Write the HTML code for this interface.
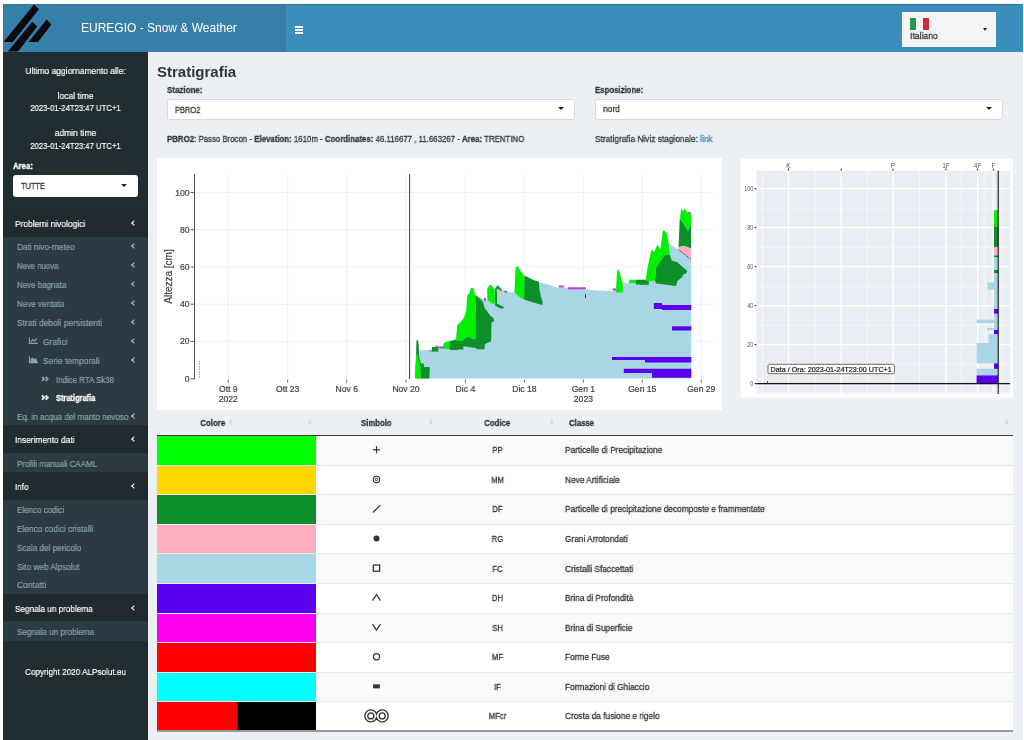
<!DOCTYPE html>
<html><head><meta charset="utf-8">
<style>
*{box-sizing:border-box;margin:0;padding:0}
html,body{width:1024px;height:740px;overflow:hidden;background:#fff;font-family:"Liberation Sans",sans-serif}
.a{position:absolute}
.t{position:absolute;white-space:nowrap;line-height:20px;height:20px;will-change:transform}
.ov{position:absolute;left:0;top:0;will-change:transform}
.chev{position:absolute;width:4px;height:4px;border-left:1.7px solid #b8c7ce;border-bottom:1.7px solid #b8c7ce;transform:rotate(45deg)}
.caret{position:absolute;width:0;height:0;border-left:3.4px solid transparent;border-right:3.4px solid transparent;border-top:3.8px solid #222}
.sort{position:absolute;width:4px;height:8px}
.sort:before,.sort:after{content:"";position:absolute;left:0;border-left:2px solid transparent;border-right:2px solid transparent}
.sort:before{top:0;border-bottom:3px solid #d3d6db}
.sort:after{bottom:0;border-top:3px solid #d3d6db}
</style></head><body>

<div class="a" style="left:3.00px;top:4.00px;width:1019.50px;height:736.00px;background:#ecf0f5;"></div>
<div class="a" style="left:3.00px;top:4.00px;width:282.50px;height:47.50px;background:#367fa9;"></div>
<div class="a" style="left:285.50px;top:4.00px;width:737.00px;height:47.50px;background:#3c8dbc;"></div>
<div class="a" style="left:3.00px;top:4.00px;width:1019.50px;height:1.00px;background:#33759c;"></div>
<div class="a" style="left:3.00px;top:4.00px;width:1.00px;height:47.50px;background:#33759c;"></div>
<svg class="ov" width="60" height="56" viewBox="0 0 60 56">
<polygon points="34.0,4.5 38.9,9.3 12.8,42 3.5,42" fill="#0a0a0f"/>
<polygon points="32.3,21.7 37.2,26.6 18.0,51.5 7.8,51.5" fill="#0a0a0f"/>
<polygon points="46.7,19.6 51.4,24.6 38.0,42 28.6,42" fill="#0a0a0f"/>
</svg>
<div class="t" style="left:81px;top:17.7px;font-size:12px;color:#fff;transform:scaleY(1.05)">EUREGIO - Snow &amp; Weather</div>
<div class="a" style="left:295.00px;top:25.80px;width:8.30px;height:1.80px;background:#fff;"></div>
<div class="a" style="left:295.00px;top:28.80px;width:8.30px;height:1.80px;background:#fff;"></div>
<div class="a" style="left:295.00px;top:31.80px;width:8.30px;height:1.80px;background:#fff;"></div>
<div class="a" style="left:901.80px;top:11.80px;width:94.60px;height:35.20px;background:#f4f4f4;"></div>
<div class="a" style="left:910.20px;top:17.50px;width:6.20px;height:12.50px;background:#1f9a48;"></div>
<div class="a" style="left:922.70px;top:17.50px;width:6.50px;height:12.50px;background:#d42a35;"></div>
<div class="t" style="top:26.00px;font-size:9.56px;color:#333;-webkit-text-stroke:0.28px #333;left:910.00px;transform:scaleX(0.900);transform-origin:0 50%;">Italiano</div>
<div class="caret" style="left:983px;top:28.2px;border-left-width:2.9px;border-right-width:2.9px;border-top-width:3.2px"></div>
<div class="a" style="left:3.00px;top:51.50px;width:145.00px;height:688.50px;background:#222d32;"></div>
<div class="t" style="top:61.00px;font-size:9.39px;color:#fff;-webkit-text-stroke:0.18px #fff;left:3.00px;width:145.00px;text-align:center;transform:scaleX(0.900);transform-origin:50% 50%;">Ultimo aggiornamento alle:</div>
<div class="t" style="top:85.80px;font-size:9.44px;color:#fff;-webkit-text-stroke:0.18px #fff;left:3.00px;width:145.00px;text-align:center;transform:scaleX(0.900);transform-origin:50% 50%;">local time</div>
<div class="t" style="top:98.40px;font-size:8.61px;color:#fff;-webkit-text-stroke:0.18px #fff;left:3.00px;width:145.00px;text-align:center;transform:scaleX(0.900);transform-origin:50% 50%;">2023-01-24T23:47 UTC+1</div>
<div class="t" style="top:123.20px;font-size:9.44px;color:#fff;-webkit-text-stroke:0.18px #fff;left:3.00px;width:145.00px;text-align:center;transform:scaleX(0.900);transform-origin:50% 50%;">admin time</div>
<div class="t" style="top:135.80px;font-size:8.61px;color:#fff;-webkit-text-stroke:0.18px #fff;left:3.00px;width:145.00px;text-align:center;transform:scaleX(0.900);transform-origin:50% 50%;">2023-01-24T23:47 UTC+1</div>
<div class="t" style="top:156.00px;font-size:8.67px;color:#fff;font-weight:bold;-webkit-text-stroke:0.28px #fff;left:12.50px;transform:scaleX(0.900);transform-origin:0 50%;">Area:</div>
<div class="a" style="left:13.00px;top:175.40px;width:125.00px;height:21.50px;background:#fff;border-radius:3px"></div>
<div class="t" style="top:177.30px;font-size:8.28px;color:#333;-webkit-text-stroke:0.28px #333;left:21.00px;transform:scaleX(0.900);transform-origin:0 50%;">TUTTE</div>
<div class="caret" style="left:120.8px;top:183.8px"></div>
<div class="a" style="left:3.00px;top:209.70px;width:145.00px;height:27.00px;background:#202a2f;"></div>
<div class="a" style="left:3.00px;top:236.70px;width:145.00px;height:188.70px;background:#2c3b41;"></div>
<div class="a" style="left:3.00px;top:425.40px;width:145.00px;height:27.60px;background:#202a2f;"></div>
<div class="a" style="left:3.00px;top:453.00px;width:145.00px;height:18.90px;background:#2c3b41;"></div>
<div class="a" style="left:3.00px;top:471.90px;width:145.00px;height:27.70px;background:#202a2f;"></div>
<div class="a" style="left:3.00px;top:499.60px;width:145.00px;height:94.30px;background:#2c3b41;"></div>
<div class="a" style="left:3.00px;top:593.90px;width:145.00px;height:26.90px;background:#202a2f;"></div>
<div class="a" style="left:3.00px;top:620.80px;width:145.00px;height:19.90px;background:#2c3b41;"></div>
<div class="t" style="top:213.80px;font-size:9.37px;color:#fff;-webkit-text-stroke:0.18px #fff;left:14.70px;transform:scaleX(0.900);transform-origin:0 50%;">Problemi nivologici</div>
<div class="chev" style="left:132.4px;top:220.80px;border-color:#fff"></div>
<div class="t" style="top:237.30px;font-size:9.16px;color:#8aa4af;-webkit-text-stroke:0.18px #8aa4af;left:16.60px;transform:scaleX(0.900);transform-origin:0 50%;">Dati nivo-meteo</div>
<div class="chev" style="left:132.4px;top:244.30px;border-color:#b8c7ce"></div>
<div class="t" style="top:256.10px;font-size:8.63px;color:#8aa4af;-webkit-text-stroke:0.18px #8aa4af;left:16.60px;transform:scaleX(0.900);transform-origin:0 50%;">Neve nuova</div>
<div class="chev" style="left:132.4px;top:263.10px;border-color:#b8c7ce"></div>
<div class="t" style="top:275.10px;font-size:8.84px;color:#8aa4af;-webkit-text-stroke:0.18px #8aa4af;left:16.60px;transform:scaleX(0.900);transform-origin:0 50%;">Neve bagnata</div>
<div class="chev" style="left:132.4px;top:282.10px;border-color:#b8c7ce"></div>
<div class="t" style="top:293.90px;font-size:8.92px;color:#8aa4af;-webkit-text-stroke:0.18px #8aa4af;left:16.60px;transform:scaleX(0.900);transform-origin:0 50%;">Neve ventata</div>
<div class="chev" style="left:132.4px;top:300.90px;border-color:#b8c7ce"></div>
<div class="t" style="top:312.50px;font-size:9.37px;color:#8aa4af;-webkit-text-stroke:0.18px #8aa4af;left:16.60px;transform:scaleX(0.900);transform-origin:0 50%;">Strati deboli persistenti</div>
<div class="chev" style="left:132.4px;top:319.50px;border-color:#b8c7ce"></div>
<div class="t" style="top:331.80px;font-size:9.44px;color:#8aa4af;-webkit-text-stroke:0.18px #8aa4af;left:43.30px;transform:scaleX(0.900);transform-origin:0 50%;">Grafici</div>
<div class="chev" style="left:132.4px;top:338.80px;border-color:#b8c7ce"></div>
<div class="t" style="top:350.60px;font-size:9.36px;color:#8aa4af;-webkit-text-stroke:0.18px #8aa4af;left:43.30px;transform:scaleX(0.900);transform-origin:0 50%;">Serie temporali</div>
<div class="chev" style="left:132.4px;top:357.60px;border-color:#b8c7ce"></div>
<div class="t" style="top:369.80px;font-size:8.76px;color:#8aa4af;-webkit-text-stroke:0.18px #8aa4af;left:56.00px;transform:scaleX(0.900);transform-origin:0 50%;">Indice RTA Sk38</div>
<div class="t" style="top:388.40px;font-size:8.29px;color:#fff;font-weight:bold;-webkit-text-stroke:0.28px #fff;left:56.00px;transform:scaleX(0.900);transform-origin:0 50%;">Stratigrafia</div>
<div class="t" style="top:406.90px;font-size:9.02px;color:#8aa4af;-webkit-text-stroke:0.18px #8aa4af;left:16.60px;transform:scaleX(0.900);transform-origin:0 50%;">Eq. in acqua del manto nevoso</div>
<div class="chev" style="left:132.4px;top:413.90px;border-color:#b8c7ce"></div>
<div class="t" style="top:430.30px;font-size:9.29px;color:#fff;-webkit-text-stroke:0.18px #fff;left:14.70px;transform:scaleX(0.900);transform-origin:0 50%;">Inserimento dati</div>
<div class="chev" style="left:132.4px;top:437.30px;border-color:#fff"></div>
<div class="t" style="top:453.60px;font-size:8.92px;color:#8aa4af;-webkit-text-stroke:0.18px #8aa4af;left:16.60px;transform:scaleX(0.900);transform-origin:0 50%;">Profili manuali CAAML</div>
<div class="t" style="top:476.60px;font-size:8.97px;color:#fff;-webkit-text-stroke:0.18px #fff;left:14.70px;transform:scaleX(0.900);transform-origin:0 50%;">Info</div>
<div class="chev" style="left:132.4px;top:483.60px;border-color:#fff"></div>
<div class="t" style="top:500.20px;font-size:8.92px;color:#8aa4af;-webkit-text-stroke:0.18px #8aa4af;left:16.60px;transform:scaleX(0.900);transform-origin:0 50%;">Elenco codici</div>
<div class="t" style="top:518.80px;font-size:9.20px;color:#8aa4af;-webkit-text-stroke:0.18px #8aa4af;left:16.60px;transform:scaleX(0.900);transform-origin:0 50%;">Elenco codici cristalli</div>
<div class="t" style="top:538.00px;font-size:9.04px;color:#8aa4af;-webkit-text-stroke:0.18px #8aa4af;left:16.60px;transform:scaleX(0.900);transform-origin:0 50%;">Scala del pericolo</div>
<div class="t" style="top:556.60px;font-size:9.15px;color:#8aa4af;-webkit-text-stroke:0.18px #8aa4af;left:16.60px;transform:scaleX(0.900);transform-origin:0 50%;">Sito web Alpsolut</div>
<div class="t" style="top:575.40px;font-size:9.44px;color:#8aa4af;-webkit-text-stroke:0.18px #8aa4af;left:16.60px;transform:scaleX(0.900);transform-origin:0 50%;">Contatti</div>
<div class="t" style="top:598.50px;font-size:9.09px;color:#fff;-webkit-text-stroke:0.18px #fff;left:14.70px;transform:scaleX(0.900);transform-origin:0 50%;">Segnala un problema</div>
<div class="chev" style="left:132.4px;top:605.50px;border-color:#fff"></div>
<div class="t" style="top:622.00px;font-size:9.04px;color:#8aa4af;-webkit-text-stroke:0.18px #8aa4af;left:16.60px;transform:scaleX(0.900);transform-origin:0 50%;">Segnala un problema</div>
<div class="t" style="top:662.40px;font-size:9.06px;color:#fff;-webkit-text-stroke:0.18px #fff;left:3.00px;width:145.00px;text-align:center;transform:scaleX(0.900);transform-origin:50% 50%;">Copyright 2020 ALPsolut.eu</div>
<svg class="ov" width="160" height="420" viewBox="0 0 160 420">
<path d="M29.4,337.4 V343.4 H37.8" stroke="#8aa4af" stroke-width="1.1" fill="none"/>
<path d="M30.8,341.8 L32.8,339.6 L34.6,341 L37,338.4" stroke="#8aa4af" stroke-width="1.2" fill="none"/>
<path d="M29.4,356.2 V362.6 H38" stroke="#8aa4af" stroke-width="1.1" fill="none"/>
<path d="M30.6,362 V359 L32.4,357.4 L34.2,359.2 L35.8,357.8 L37.6,362 Z" fill="#8aa4af"/>
<path d="M42,376.8 L44.2,378.9 L42,381 M45.6,376.8 L47.8,378.9 L45.6,381" stroke="#8aa4af" stroke-width="1.7" fill="none"/>
<path d="M42,395.5 L44.2,397.6 L42,399.7 M45.6,395.5 L47.8,397.6 L45.6,399.7" stroke="#fff" stroke-width="1.8" fill="none"/>
</svg>
<div class="t" style="left:157.4px;top:62.1px;font-size:15px;font-weight:bold;color:#333">Stratigrafia</div>
<div class="t" style="top:79.50px;font-size:8.89px;color:#333;font-weight:bold;-webkit-text-stroke:0.28px #333;left:167.00px;transform:scaleX(0.900);transform-origin:0 50%;">Stazione:</div>
<div class="a" style="left:167.00px;top:99.20px;width:408.40px;height:20.40px;background:#fff;border:1px solid #d6dadf;border-radius:2.5px"></div>
<div class="t" style="top:99.60px;font-size:8.33px;color:#333;-webkit-text-stroke:0.28px #333;left:174.80px;transform:scaleX(0.900);transform-origin:0 50%;">PBRO2</div>
<div class="caret" style="left:558.3px;top:107.4px"></div>
<div class="t" style="top:79.50px;font-size:8.67px;color:#333;font-weight:bold;-webkit-text-stroke:0.28px #333;left:594.90px;transform:scaleX(0.900);transform-origin:0 50%;">Esposizione:</div>
<div class="a" style="left:594.90px;top:99.20px;width:408.20px;height:20.40px;background:#fff;border:1px solid #d6dadf;border-radius:2.5px"></div>
<div class="t" style="top:99.40px;font-size:9.33px;color:#333;-webkit-text-stroke:0.28px #333;left:603.00px;transform:scaleX(0.900);transform-origin:0 50%;">nord</div>
<div class="caret" style="left:985.6px;top:107.4px"></div>
<div class="t" style="top:128.90px;font-size:8.72px;color:#333;-webkit-text-stroke:0.28px #333;left:167.00px;transform:scaleX(0.900);transform-origin:0 50%;"><b>PBRO2</b>: Passo Brocon - <b>Elevation:</b> 1610m - <b>Coordinates:</b> 46.116677 , 11.663267 - <b>Area:</b> TRENTINO</div>
<div class="t" style="top:129.30px;font-size:9.22px;color:#333;-webkit-text-stroke:0.28px #333;left:595.00px;transform:scaleX(0.900);transform-origin:0 50%;">Stratigrafia Niviz stagionale: <span style="color:#3c8dbc;-webkit-text-stroke-color:#3c8dbc">link</span></div>
<svg class="ov" width="1024" height="740" viewBox="0 0 1024 740" font-family='"Liberation Sans", sans-serif'><rect x="157.00" y="158.00" width="565.00" height="252.00" fill="#fff" /><line x1="195.00" y1="341.40" x2="714.50" y2="341.40" stroke="#eeeeee" stroke-width="0.90" /><line x1="195.00" y1="304.20" x2="714.50" y2="304.20" stroke="#eeeeee" stroke-width="0.90" /><line x1="195.00" y1="267.00" x2="714.50" y2="267.00" stroke="#eeeeee" stroke-width="0.90" /><line x1="195.00" y1="229.70" x2="714.50" y2="229.70" stroke="#eeeeee" stroke-width="0.90" /><line x1="195.00" y1="192.50" x2="714.50" y2="192.50" stroke="#eeeeee" stroke-width="0.90" /><line x1="228.30" y1="174.20" x2="228.30" y2="378.70" stroke="#eeeeee" stroke-width="0.90" /><line x1="287.70" y1="174.20" x2="287.70" y2="378.70" stroke="#eeeeee" stroke-width="0.90" /><line x1="346.70" y1="174.20" x2="346.70" y2="378.70" stroke="#eeeeee" stroke-width="0.90" /><line x1="406.00" y1="174.20" x2="406.00" y2="378.70" stroke="#eeeeee" stroke-width="0.90" /><line x1="465.40" y1="174.20" x2="465.40" y2="378.70" stroke="#eeeeee" stroke-width="0.90" /><line x1="524.40" y1="174.20" x2="524.40" y2="378.70" stroke="#eeeeee" stroke-width="0.90" /><line x1="583.40" y1="174.20" x2="583.40" y2="378.70" stroke="#eeeeee" stroke-width="0.90" /><line x1="642.30" y1="174.20" x2="642.30" y2="378.70" stroke="#eeeeee" stroke-width="0.90" /><line x1="701.30" y1="174.20" x2="701.30" y2="378.70" stroke="#eeeeee" stroke-width="0.90" /><line x1="194.50" y1="174.00" x2="194.50" y2="379.20" stroke="#555" stroke-width="1.00" /><line x1="190.50" y1="378.70" x2="194.50" y2="378.70" stroke="#555" stroke-width="0.90" /><text x="189.5" y="381.7" font-size="8.60" fill="#444" stroke="#444" stroke-width="0.22" text-anchor="end" font-weight="normal" >0</text><line x1="190.50" y1="341.40" x2="194.50" y2="341.40" stroke="#555" stroke-width="0.90" /><text x="189.5" y="344.4" font-size="8.60" fill="#444" stroke="#444" stroke-width="0.22" text-anchor="end" font-weight="normal" >20</text><line x1="190.50" y1="304.20" x2="194.50" y2="304.20" stroke="#555" stroke-width="0.90" /><text x="189.5" y="307.2" font-size="8.60" fill="#444" stroke="#444" stroke-width="0.22" text-anchor="end" font-weight="normal" >40</text><line x1="190.50" y1="267.00" x2="194.50" y2="267.00" stroke="#555" stroke-width="0.90" /><text x="189.5" y="270.0" font-size="8.60" fill="#444" stroke="#444" stroke-width="0.22" text-anchor="end" font-weight="normal" >60</text><line x1="190.50" y1="229.70" x2="194.50" y2="229.70" stroke="#555" stroke-width="0.90" /><text x="189.5" y="232.7" font-size="8.60" fill="#444" stroke="#444" stroke-width="0.22" text-anchor="end" font-weight="normal" >80</text><line x1="190.50" y1="192.50" x2="194.50" y2="192.50" stroke="#555" stroke-width="0.90" /><text x="189.5" y="195.5" font-size="8.60" fill="#444" stroke="#444" stroke-width="0.22" text-anchor="end" font-weight="normal" >100</text><line x1="228.30" y1="379.50" x2="228.30" y2="383.00" stroke="#666" stroke-width="0.90" /><text x="228.3" y="391.8" font-size="8.60" fill="#444" stroke="#444" stroke-width="0.22" text-anchor="middle" font-weight="normal" >Ott 9</text><line x1="287.70" y1="379.50" x2="287.70" y2="383.00" stroke="#666" stroke-width="0.90" /><text x="287.7" y="391.8" font-size="8.60" fill="#444" stroke="#444" stroke-width="0.22" text-anchor="middle" font-weight="normal" >Ott 23</text><line x1="346.70" y1="379.50" x2="346.70" y2="383.00" stroke="#666" stroke-width="0.90" /><text x="346.7" y="391.8" font-size="8.60" fill="#444" stroke="#444" stroke-width="0.22" text-anchor="middle" font-weight="normal" >Nov 6</text><line x1="406.00" y1="379.50" x2="406.00" y2="383.00" stroke="#666" stroke-width="0.90" /><text x="406.0" y="391.8" font-size="8.60" fill="#444" stroke="#444" stroke-width="0.22" text-anchor="middle" font-weight="normal" >Nov 20</text><line x1="465.40" y1="379.50" x2="465.40" y2="383.00" stroke="#666" stroke-width="0.90" /><text x="465.4" y="391.8" font-size="8.60" fill="#444" stroke="#444" stroke-width="0.22" text-anchor="middle" font-weight="normal" >Dic 4</text><line x1="524.40" y1="379.50" x2="524.40" y2="383.00" stroke="#666" stroke-width="0.90" /><text x="524.4" y="391.8" font-size="8.60" fill="#444" stroke="#444" stroke-width="0.22" text-anchor="middle" font-weight="normal" >Dic 18</text><line x1="583.40" y1="379.50" x2="583.40" y2="383.00" stroke="#666" stroke-width="0.90" /><text x="583.4" y="391.8" font-size="8.60" fill="#444" stroke="#444" stroke-width="0.22" text-anchor="middle" font-weight="normal" >Gen 1</text><line x1="642.30" y1="379.50" x2="642.30" y2="383.00" stroke="#666" stroke-width="0.90" /><text x="642.3" y="391.8" font-size="8.60" fill="#444" stroke="#444" stroke-width="0.22" text-anchor="middle" font-weight="normal" >Gen 15</text><line x1="701.30" y1="379.50" x2="701.30" y2="383.00" stroke="#666" stroke-width="0.90" /><text x="701.3" y="391.8" font-size="8.60" fill="#444" stroke="#444" stroke-width="0.22" text-anchor="middle" font-weight="normal" >Gen 29</text><text x="228.3" y="402.4" font-size="8.60" fill="#444" stroke="#444" stroke-width="0.22" text-anchor="middle" font-weight="normal" >2022</text><text x="583.4" y="402.4" font-size="8.60" fill="#444" stroke="#444" stroke-width="0.22" text-anchor="middle" font-weight="normal" >2023</text><text x="0.0" y="0.0" font-size="10.00" fill="#444" stroke="#444" stroke-width="0.22" text-anchor="middle" font-weight="normal" transform="translate(171.8,276.5) rotate(-90)">Altezza [cm]</text><line x1="199.50" y1="361.00" x2="199.50" y2="378.00" stroke="#888" stroke-width="0.80" stroke-dasharray="1.5,1"/><polygon points="414.6,378.5 416.0,350.0 417.4,339.0 419.0,350.3 431.0,350.3 432.0,347.0 438.0,347.0 440.0,345.7 443.4,346.2 445.8,342.3 449.7,341.3 455.6,339.4 457.5,324.8 460.9,321.9 464.3,317.0 466.3,311.2 467.2,295.6 469.2,293.7 471.1,287.8 473.5,288.3 475.0,294.6 482.8,298.5 487.5,300.0 487.2,289.5 489.3,285.3 491.7,285.6 494.5,289.5 497.7,285.3 501.6,289.5 507.2,291.0 507.4,292.3 514.6,292.3 515.6,267.7 517.4,266.0 524.4,276.2 538.8,281.8 539.5,282.5 548.0,284.2 556.6,287.4 585.0,289.5 610.0,291.2 616.0,290.0 618.1,268.9 622.2,281.0 627.6,283.8 629.6,279.7 645.6,280.9 647.5,268.4 651.2,251.0 652.4,249.8 654.3,252.3 657.4,244.8 660.5,249.8 663.0,230.5 664.9,231.1 666.8,233.6 668.6,243.6 678.6,249.8 679.8,222.4 681.1,208.7 682.9,211.2 684.8,208.7 687.3,212.4 689.2,211.8 691.1,213.7 691.1,378.5" fill="#a9d6e5" /><polygon points="416.0,366.0 416.4,341.0 417.5,339.2 418.5,343.0 419.2,357.0 420.8,363.5 423.8,363.5 423.8,367.0 429.8,367.0 429.4,378.5 421.0,378.5" fill="#0d8f29" /><polygon points="415.0,378.5 415.3,366.0 416.3,356.0 417.3,353.0 418.6,359.0 420.4,366.0 421.2,378.5" fill="#00f000" /><rect x="432.00" y="347.00" width="6.30" height="4.60" fill="#0d8f29" /><rect x="429.30" y="350.20" width="2.50" height="1.40" fill="#c83ad8" opacity="0.7"/><polygon points="435.2,345.2 437.5,345.2 440.0,347.0 443.0,347.0 443.0,348.4 439.5,348.4 437.0,346.8 435.2,346.8" fill="#c83ad8" opacity="0.75"/><polygon points="443.0,348.0 444.0,343.0 449.0,341.5 451.0,341.5 451.0,349.0 443.0,349.0" fill="#00f000" /><polygon points="475.0,294.6 477.0,296.6 480.8,299.5 482.8,301.4 484.7,308.3 487.7,312.1 490.6,316.0 493.5,318.0 494.0,320.9 491.5,322.8 491.1,341.3 484.7,344.2 484.7,349.3 477.0,349.3 476.0,348.1 463.3,346.2 463.3,349.6 458.5,349.6 457.5,350.0 449.7,350.0 449.7,341.2 456.0,339.6 462.4,341.0 464.3,338.4 469.2,336.5 473.1,339.4 476.0,338.4 476.0,311.2" fill="#0d8f29" /><polygon points="456.0,340.5 457.5,324.8 460.9,321.9 464.3,317.0 466.3,311.2 467.2,295.6 469.2,293.7 471.1,287.8 473.5,288.3 475.0,294.6 476.0,311.2 476.0,338.4 473.1,339.4 469.2,336.5 464.3,338.4 462.4,341.0 456.0,341.0" fill="#00f000" /><polygon points="443.4,348.6 443.4,344.0 446.0,342.0 449.7,341.2 449.7,348.6" fill="#00f000" /><rect x="440.00" y="346.50" width="3.40" height="1.90" fill="#c83ad8" opacity="0.75"/><polygon points="494.5,289.5 497.7,285.3 501.6,289.5 501.6,291.5 497.7,288.5 496.0,291.0" fill="#0d8f29" /><polygon points="494.8,291.0 497.0,291.0 497.0,303.6 503.7,307.0 503.7,308.5 500.5,308.5 495.2,305.7" fill="#0d8f29" /><polygon points="487.2,289.5 489.3,285.3 491.7,285.6 494.5,289.5 495.2,302.2 493.1,304.3 487.5,300.0" fill="#00f000" /><rect x="497.40" y="291.00" width="4.90" height="3.40" fill="#ffafc2" /><rect x="504.40" y="291.00" width="2.80" height="1.30" fill="#0d8f29" /><rect x="484.00" y="298.00" width="2.00" height="2.80" fill="#c83ad8" /><polygon points="524.4,276.2 526.2,276.2 529.7,278.3 534.6,280.4 538.8,281.8 539.5,289.5 540.9,296.5 542.7,302.2 542.3,305.0 539.5,304.3 532.5,302.2 524.1,299.4" fill="#0d8f29" /><polygon points="514.6,292.3 515.6,267.7 517.4,266.0 519.1,269.1 522.3,273.4 524.4,276.2 524.1,299.4 521.2,298.0 517.0,295.1" fill="#00f000" /><rect x="558.80" y="285.50" width="5.10" height="2.00" fill="#c83ad8" /><rect x="568.00" y="287.30" width="17.80" height="2.00" fill="#c83ad8" /><rect x="585.00" y="294.00" width="1.00" height="4.00" fill="#5a00f0" /><polygon points="616.0,292.6 617.0,272.0 618.1,268.9 619.5,272.0 622.8,285.0 622.8,292.6" fill="#00f000" /><rect x="612.70" y="288.50" width="3.30" height="2.00" fill="#c83ad8" /><rect x="629.60" y="279.70" width="6.10" height="3.40" fill="#00f000" /><rect x="635.70" y="279.70" width="12.80" height="4.80" fill="#0d8f29" /><polygon points="654.9,280.9 656.2,267.2 660.5,261.0 664.9,254.8 669.9,254.8 671.7,260.4 677.3,262.2 683.0,267.2 687.3,270.9 686.0,273.4 683.0,274.7 682.3,277.2 677.3,280.9 676.1,285.9 664.9,284.6 656.2,283.4" fill="#0d8f29" /><polygon points="645.6,280.9 647.5,268.4 651.2,251.0 652.4,249.8 654.3,252.3 657.4,244.8 660.5,249.8 663.0,230.5 664.9,231.1 666.8,233.6 668.6,243.6 669.9,254.8 664.9,254.8 660.5,261.0 656.2,267.2 654.9,280.9" fill="#00f000" /><rect x="640.00" y="281.50" width="8.70" height="3.10" fill="#0d8f29" /><polygon points="678.6,247.3 679.8,218.7 683.6,223.6 687.9,231.1 691.1,224.9 691.1,248.5 685.0,246.0 682.3,246.0" fill="#0d8f29" /><polygon points="679.8,222.4 681.1,208.7 682.9,211.2 684.8,208.7 687.3,212.4 689.2,211.8 691.1,213.7 691.1,224.9 687.9,231.1 683.6,223.6 679.8,218.7" fill="#00f000" /><polygon points="678.6,247.3 682.3,246.0 685.0,246.0 691.1,248.5 691.1,259.7 678.6,249.8" fill="#ffafc2" /><line x1="678.60" y1="249.60" x2="691.10" y2="259.70" stroke="#333" stroke-width="0.90" stroke-dasharray="1.2,0.6"/><rect x="688.50" y="211.80" width="2.60" height="1.90" fill="#c83ad8" opacity="0.6"/><polygon points="653.8,303.0 662.0,303.0 662.0,305.0 691.3,305.0 691.3,310.0 662.0,310.0 662.0,309.0 653.8,309.0" fill="#5a00f0" /><rect x="672.00" y="326.30" width="19.30" height="4.20" fill="#5a00f0" /><polygon points="612.0,357.0 691.3,357.0 691.3,362.5 645.0,362.5 645.0,360.0 612.0,360.0" fill="#5a00f0" /><polygon points="623.8,368.8 691.3,368.8 691.3,377.8 652.0,377.8 652.0,373.0 623.8,373.0" fill="#5a00f0" /><line x1="409.60" y1="174.00" x2="409.60" y2="379.00" stroke="#444" stroke-width="1.05" /><rect x="740.60" y="158.60" width="272.40" height="239.00" fill="#fff" /><rect x="756.40" y="170.70" width="253.60" height="223.40" fill="#eaedf3" /><line x1="762.60" y1="170.70" x2="762.60" y2="394.10" stroke="#f7f8fb" stroke-width="0.90" /><line x1="815.00" y1="170.70" x2="815.00" y2="394.10" stroke="#f7f8fb" stroke-width="0.90" /><line x1="867.20" y1="170.70" x2="867.20" y2="394.10" stroke="#f7f8fb" stroke-width="0.90" /><line x1="919.50" y1="170.70" x2="919.50" y2="394.10" stroke="#f7f8fb" stroke-width="0.90" /><line x1="961.40" y1="170.70" x2="961.40" y2="394.10" stroke="#f7f8fb" stroke-width="0.90" /><line x1="985.40" y1="170.70" x2="985.40" y2="394.10" stroke="#f7f8fb" stroke-width="0.90" /><line x1="1002.00" y1="170.70" x2="1002.00" y2="394.10" stroke="#f7f8fb" stroke-width="0.90" /><line x1="756.40" y1="364.10" x2="1010.00" y2="364.10" stroke="#f7f8fb" stroke-width="0.90" /><line x1="756.40" y1="325.10" x2="1010.00" y2="325.10" stroke="#f7f8fb" stroke-width="0.90" /><line x1="756.40" y1="286.10" x2="1010.00" y2="286.10" stroke="#f7f8fb" stroke-width="0.90" /><line x1="756.40" y1="247.10" x2="1010.00" y2="247.10" stroke="#f7f8fb" stroke-width="0.90" /><line x1="756.40" y1="208.10" x2="1010.00" y2="208.10" stroke="#f7f8fb" stroke-width="0.90" /><line x1="756.40" y1="393.00" x2="1010.00" y2="393.00" stroke="#f7f8fb" stroke-width="0.90" /><line x1="788.50" y1="170.70" x2="788.50" y2="394.10" stroke="#fff" stroke-width="1.40" /><line x1="788.50" y1="168.50" x2="788.50" y2="170.70" stroke="#333" stroke-width="1.00" /><text x="788.5" y="168.0" font-size="6.50" fill="#555" stroke="#555" stroke-width="0.00" text-anchor="middle" font-weight="normal" >K</text><line x1="841.20" y1="170.70" x2="841.20" y2="394.10" stroke="#fff" stroke-width="1.40" /><line x1="841.20" y1="168.50" x2="841.20" y2="170.70" stroke="#333" stroke-width="1.00" /><line x1="893.00" y1="170.70" x2="893.00" y2="394.10" stroke="#fff" stroke-width="1.40" /><line x1="893.00" y1="168.50" x2="893.00" y2="170.70" stroke="#333" stroke-width="1.00" /><text x="893.0" y="168.0" font-size="6.50" fill="#555" stroke="#555" stroke-width="0.00" text-anchor="middle" font-weight="normal" >P</text><line x1="946.00" y1="170.70" x2="946.00" y2="394.10" stroke="#fff" stroke-width="1.40" /><line x1="946.00" y1="168.50" x2="946.00" y2="170.70" stroke="#333" stroke-width="1.00" /><text x="946.0" y="168.0" font-size="6.50" fill="#555" stroke="#555" stroke-width="0.00" text-anchor="middle" font-weight="normal" >1F</text><line x1="977.60" y1="170.70" x2="977.60" y2="394.10" stroke="#fff" stroke-width="1.40" /><line x1="977.60" y1="168.50" x2="977.60" y2="170.70" stroke="#333" stroke-width="1.00" /><text x="977.6" y="168.0" font-size="6.50" fill="#555" stroke="#555" stroke-width="0.00" text-anchor="middle" font-weight="normal" >4F</text><line x1="993.40" y1="170.70" x2="993.40" y2="394.10" stroke="#fff" stroke-width="1.40" /><line x1="993.40" y1="168.50" x2="993.40" y2="170.70" stroke="#333" stroke-width="1.00" /><text x="993.4" y="168.0" font-size="6.50" fill="#555" stroke="#555" stroke-width="0.00" text-anchor="middle" font-weight="normal" >F</text><line x1="756.40" y1="383.60" x2="1010.00" y2="383.60" stroke="#fff" stroke-width="1.40" /><line x1="754.60" y1="383.60" x2="756.40" y2="383.60" stroke="#333" stroke-width="1.20" /><text transform="translate(753.3,386.0) scale(0.82,1)" font-size="6.6" fill="#555" text-anchor="end">0</text><line x1="756.40" y1="344.60" x2="1010.00" y2="344.60" stroke="#fff" stroke-width="1.40" /><line x1="754.60" y1="344.60" x2="756.40" y2="344.60" stroke="#333" stroke-width="1.20" /><text transform="translate(753.3,347.0) scale(0.82,1)" font-size="6.6" fill="#555" text-anchor="end">20</text><line x1="756.40" y1="305.60" x2="1010.00" y2="305.60" stroke="#fff" stroke-width="1.40" /><line x1="754.60" y1="305.60" x2="756.40" y2="305.60" stroke="#333" stroke-width="1.20" /><text transform="translate(753.3,308.0) scale(0.82,1)" font-size="6.6" fill="#555" text-anchor="end">40</text><line x1="756.40" y1="266.60" x2="1010.00" y2="266.60" stroke="#fff" stroke-width="1.40" /><line x1="754.60" y1="266.60" x2="756.40" y2="266.60" stroke="#333" stroke-width="1.20" /><text transform="translate(753.3,269.0) scale(0.82,1)" font-size="6.6" fill="#555" text-anchor="end">60</text><line x1="756.40" y1="227.60" x2="1010.00" y2="227.60" stroke="#fff" stroke-width="1.40" /><line x1="754.60" y1="227.60" x2="756.40" y2="227.60" stroke="#333" stroke-width="1.20" /><text transform="translate(753.3,230.0) scale(0.82,1)" font-size="6.6" fill="#555" text-anchor="end">80</text><line x1="756.40" y1="188.60" x2="1010.00" y2="188.60" stroke="#fff" stroke-width="1.40" /><line x1="754.60" y1="188.60" x2="756.40" y2="188.60" stroke="#333" stroke-width="1.20" /><text transform="translate(753.3,191.0) scale(0.82,1)" font-size="6.6" fill="#555" text-anchor="end">100</text><rect x="994.00" y="210.20" width="4.20" height="16.20" fill="#00f000" /><rect x="994.00" y="226.40" width="4.20" height="21.00" fill="#0d8f29" /><rect x="994.00" y="247.40" width="4.20" height="8.10" fill="#ffafc2" /><rect x="994.00" y="255.50" width="4.20" height="1.50" fill="#0d8f29" /><rect x="994.00" y="257.00" width="4.20" height="13.00" fill="#a9d6e5" /><rect x="994.00" y="270.00" width="4.20" height="3.40" fill="#0d8f29" /><rect x="994.00" y="273.40" width="4.20" height="35.60" fill="#a9d6e5" /><rect x="987.60" y="282.40" width="10.60" height="7.20" fill="#a9d6e5" /><rect x="994.00" y="309.00" width="4.20" height="4.80" fill="#5a00f0" /><rect x="994.00" y="313.80" width="4.20" height="16.20" fill="#a9d6e5" /><rect x="976.60" y="319.70" width="21.60" height="3.30" fill="#a9d6e5" /><rect x="987.00" y="328.00" width="11.20" height="2.00" fill="#a9d6e5" /><rect x="994.00" y="330.00" width="4.20" height="4.20" fill="#5a00f0" /><rect x="988.60" y="334.20" width="9.60" height="8.80" fill="#a9d6e5" /><rect x="976.60" y="343.00" width="21.60" height="20.40" fill="#a9d6e5" /><rect x="994.00" y="363.40" width="4.20" height="5.50" fill="#5a00f0" /><rect x="976.60" y="368.90" width="21.60" height="6.50" fill="#a9d6e5" /><rect x="976.60" y="375.40" width="21.60" height="8.20" fill="#5a00f0" /><line x1="756.40" y1="383.60" x2="1010.00" y2="383.60" stroke="#111" stroke-width="1.10" /><line x1="998.20" y1="170.70" x2="998.20" y2="394.10" stroke="#111" stroke-width="1.10" /><line x1="767.50" y1="381.00" x2="767.50" y2="383.60" stroke="#333" stroke-width="0.80" /><rect x="768" y="364.3" width="126.4" height="9.4" rx="1.5" fill="#fff" stroke="#444" stroke-width="0.8"/><text x="831.2" y="371.6" font-size="7.20" fill="#222" stroke="#222" stroke-width="0.22" text-anchor="middle" font-weight="normal" >Data / Ora: 2023-01-24T23:00 UTC+1</text></svg>
<div class="t" style="top:412.80px;font-size:8.67px;color:#333;font-weight:bold;-webkit-text-stroke:0.28px #333;left:180.00px;width:65.60px;text-align:center;transform:scaleX(0.900);transform-origin:50% 50%;">Colore</div>
<div class="t" style="top:412.80px;font-size:8.67px;color:#333;font-weight:bold;-webkit-text-stroke:0.28px #333;left:340.00px;width:72.60px;text-align:center;transform:scaleX(0.900);transform-origin:50% 50%;">Simbolo</div>
<div class="t" style="top:412.80px;font-size:8.67px;color:#333;font-weight:bold;-webkit-text-stroke:0.28px #333;left:460.00px;width:74.40px;text-align:center;transform:scaleX(0.900);transform-origin:50% 50%;">Codice</div>
<div class="t" style="top:412.80px;font-size:8.67px;color:#333;font-weight:bold;-webkit-text-stroke:0.28px #333;left:569.30px;transform:scaleX(0.900);transform-origin:0 50%;">Classe</div>
<svg class="ov" width="1024" height="740" viewBox="0 0 1024 740"><polygon points="230.8,418.6 232.6,422.2 230.8,425.8 229.0,422.2" fill="#d9dce1"/><polygon points="309.8,418.6 311.6,422.2 309.8,425.8 308.0,422.2" fill="#d9dce1"/><polygon points="431.0,418.6 432.8,422.2 431.0,425.8 429.2,422.2" fill="#d9dce1"/><polygon points="551.8,418.6 553.6,422.2 551.8,425.8 550.0,422.2" fill="#d9dce1"/><polygon points="1006.8,418.6 1008.6,422.2 1006.8,425.8 1005.0,422.2" fill="#d9dce1"/></svg>
<div class="a" style="left:156.60px;top:435.20px;width:856.10px;height:29.57px;background:#f9f9f9;"></div>
<div class="a" style="left:156.60px;top:435.20px;width:856.10px;height:1.00px;background:#e8e8e8;"></div>
<div class="a" style="left:156.60px;top:436.20px;width:159.50px;height:28.57px;background:#00ff00;"></div>
<div class="t" style="top:440.29px;font-size:8.56px;color:#333;-webkit-text-stroke:0.28px #333;left:470.00px;width:55.00px;text-align:center;transform:scaleX(0.900);transform-origin:50% 50%;">PP</div>
<div class="t" style="top:440.29px;font-size:9.22px;color:#333;-webkit-text-stroke:0.28px #333;left:564.60px;transform:scaleX(0.900);transform-origin:0 50%;">Particelle di Precipitazione</div>
<div class="a" style="left:156.60px;top:464.77px;width:856.10px;height:29.57px;background:#fff;"></div>
<div class="a" style="left:156.60px;top:464.77px;width:856.10px;height:1.00px;background:#e8e8e8;"></div>
<div class="a" style="left:156.60px;top:465.77px;width:159.50px;height:28.57px;background:#ffd700;"></div>
<div class="t" style="top:469.86px;font-size:8.56px;color:#333;-webkit-text-stroke:0.28px #333;left:470.00px;width:55.00px;text-align:center;transform:scaleX(0.900);transform-origin:50% 50%;">MM</div>
<div class="t" style="top:469.86px;font-size:9.22px;color:#333;-webkit-text-stroke:0.28px #333;left:564.60px;transform:scaleX(0.900);transform-origin:0 50%;">Neve Artificiale</div>
<div class="a" style="left:156.60px;top:494.34px;width:856.10px;height:29.57px;background:#f9f9f9;"></div>
<div class="a" style="left:156.60px;top:494.34px;width:856.10px;height:1.00px;background:#e8e8e8;"></div>
<div class="a" style="left:156.60px;top:495.34px;width:159.50px;height:28.57px;background:#0d8f29;"></div>
<div class="t" style="top:499.43px;font-size:8.56px;color:#333;-webkit-text-stroke:0.28px #333;left:470.00px;width:55.00px;text-align:center;transform:scaleX(0.900);transform-origin:50% 50%;">DF</div>
<div class="t" style="top:499.43px;font-size:9.22px;color:#333;-webkit-text-stroke:0.28px #333;left:564.60px;transform:scaleX(0.900);transform-origin:0 50%;">Particelle di precipitazione decomposte e frammentate</div>
<div class="a" style="left:156.60px;top:523.91px;width:856.10px;height:29.57px;background:#fff;"></div>
<div class="a" style="left:156.60px;top:523.91px;width:856.10px;height:1.00px;background:#e8e8e8;"></div>
<div class="a" style="left:156.60px;top:524.91px;width:159.50px;height:28.57px;background:#ffadc0;"></div>
<div class="t" style="top:528.99px;font-size:8.56px;color:#333;-webkit-text-stroke:0.28px #333;left:470.00px;width:55.00px;text-align:center;transform:scaleX(0.900);transform-origin:50% 50%;">RG</div>
<div class="t" style="top:528.99px;font-size:9.22px;color:#333;-webkit-text-stroke:0.28px #333;left:564.60px;transform:scaleX(0.900);transform-origin:0 50%;">Grani Arrotondati</div>
<div class="a" style="left:156.60px;top:553.48px;width:856.10px;height:29.57px;background:#f9f9f9;"></div>
<div class="a" style="left:156.60px;top:553.48px;width:856.10px;height:1.00px;background:#e8e8e8;"></div>
<div class="a" style="left:156.60px;top:554.48px;width:159.50px;height:28.57px;background:#a9d6e5;"></div>
<div class="t" style="top:558.56px;font-size:8.56px;color:#333;-webkit-text-stroke:0.28px #333;left:470.00px;width:55.00px;text-align:center;transform:scaleX(0.900);transform-origin:50% 50%;">FC</div>
<div class="t" style="top:558.56px;font-size:9.22px;color:#333;-webkit-text-stroke:0.28px #333;left:564.60px;transform:scaleX(0.900);transform-origin:0 50%;">Cristalli Sfaccettati</div>
<div class="a" style="left:156.60px;top:583.05px;width:856.10px;height:29.57px;background:#fff;"></div>
<div class="a" style="left:156.60px;top:583.05px;width:856.10px;height:1.00px;background:#e8e8e8;"></div>
<div class="a" style="left:156.60px;top:584.05px;width:159.50px;height:28.57px;background:#5a00f0;"></div>
<div class="t" style="top:588.13px;font-size:8.56px;color:#333;-webkit-text-stroke:0.28px #333;left:470.00px;width:55.00px;text-align:center;transform:scaleX(0.900);transform-origin:50% 50%;">DH</div>
<div class="t" style="top:588.13px;font-size:9.22px;color:#333;-webkit-text-stroke:0.28px #333;left:564.60px;transform:scaleX(0.900);transform-origin:0 50%;">Brina di Profondità</div>
<div class="a" style="left:156.60px;top:612.62px;width:856.10px;height:29.57px;background:#f9f9f9;"></div>
<div class="a" style="left:156.60px;top:612.62px;width:856.10px;height:1.00px;background:#e8e8e8;"></div>
<div class="a" style="left:156.60px;top:613.62px;width:159.50px;height:28.57px;background:#ff00f0;"></div>
<div class="t" style="top:617.70px;font-size:8.56px;color:#333;-webkit-text-stroke:0.28px #333;left:470.00px;width:55.00px;text-align:center;transform:scaleX(0.900);transform-origin:50% 50%;">SH</div>
<div class="t" style="top:617.70px;font-size:9.22px;color:#333;-webkit-text-stroke:0.28px #333;left:564.60px;transform:scaleX(0.900);transform-origin:0 50%;">Brina di Superficie</div>
<div class="a" style="left:156.60px;top:642.19px;width:856.10px;height:29.57px;background:#fff;"></div>
<div class="a" style="left:156.60px;top:642.19px;width:856.10px;height:1.00px;background:#e8e8e8;"></div>
<div class="a" style="left:156.60px;top:643.19px;width:159.50px;height:28.57px;background:#ff0000;"></div>
<div class="t" style="top:647.27px;font-size:8.56px;color:#333;-webkit-text-stroke:0.28px #333;left:470.00px;width:55.00px;text-align:center;transform:scaleX(0.900);transform-origin:50% 50%;">MF</div>
<div class="t" style="top:647.27px;font-size:9.22px;color:#333;-webkit-text-stroke:0.28px #333;left:564.60px;transform:scaleX(0.900);transform-origin:0 50%;">Forme Fuse</div>
<div class="a" style="left:156.60px;top:671.76px;width:856.10px;height:29.57px;background:#f9f9f9;"></div>
<div class="a" style="left:156.60px;top:671.76px;width:856.10px;height:1.00px;background:#e8e8e8;"></div>
<div class="a" style="left:156.60px;top:672.76px;width:159.50px;height:28.57px;background:#00ffff;"></div>
<div class="t" style="top:676.84px;font-size:8.56px;color:#333;-webkit-text-stroke:0.28px #333;left:470.00px;width:55.00px;text-align:center;transform:scaleX(0.900);transform-origin:50% 50%;">IF</div>
<div class="t" style="top:676.84px;font-size:9.22px;color:#333;-webkit-text-stroke:0.28px #333;left:564.60px;transform:scaleX(0.900);transform-origin:0 50%;">Formazioni di Ghiaccio</div>
<div class="a" style="left:156.60px;top:701.33px;width:856.10px;height:29.57px;background:#fff;"></div>
<div class="a" style="left:156.60px;top:701.33px;width:856.10px;height:1.00px;background:#e8e8e8;"></div>
<div class="a" style="left:156.60px;top:702.33px;width:80.40px;height:28.57px;background:#f00;"></div>
<div class="a" style="left:237.00px;top:702.33px;width:79.10px;height:28.57px;background:#000;"></div>
<div class="t" style="top:706.41px;font-size:8.56px;color:#333;-webkit-text-stroke:0.28px #333;left:470.00px;width:55.00px;text-align:center;transform:scaleX(0.900);transform-origin:50% 50%;">MFcr</div>
<div class="t" style="top:706.41px;font-size:9.22px;color:#333;-webkit-text-stroke:0.28px #333;left:564.60px;transform:scaleX(0.900);transform-origin:0 50%;">Crosta da fusione e rigelo</div>
<svg class="ov" width="1024" height="740" viewBox="0 0 1024 740"><line x1="372.90" y1="449.79" x2="380.10" y2="449.79" stroke="#333" stroke-width="1.20" /><line x1="376.50" y1="446.19" x2="376.50" y2="453.39" stroke="#333" stroke-width="1.20" /><circle cx="376.5" cy="479.4" r="3.2" fill="none" stroke="#333" stroke-width="1.1"/><circle cx="376.5" cy="479.4" r="1.3" fill="none" stroke="#333" stroke-width="1"/><line x1="372.90" y1="512.52" x2="380.30" y2="505.12" stroke="#333" stroke-width="1.20" /><circle cx="376.5" cy="538.5" r="3" fill="#333"/><rect x="373.4" y="565.0" width="6.2" height="6.2" fill="none" stroke="#333" stroke-width="1.3"/><path d="M372.5,600.6 L376.5,594.6 L380.5,600.6" fill="none" stroke="#333" stroke-width="1.2"/><path d="M372.5,624.2 L376.5,630.2 L380.5,624.2" fill="none" stroke="#333" stroke-width="1.2"/><circle cx="376.5" cy="656.8" r="3.1" fill="none" stroke="#333" stroke-width="1.2"/><rect x="373.10" y="684.34" width="6.80" height="4.00" fill="#333" /><path d="M376.50,714.04 A6.0,6.0 0 1 0 376.50,717.79 A6.0,6.0 0 1 0 376.50,714.04 Z" fill="none" stroke="#333" stroke-width="1.3"/><circle cx="370.8" cy="715.9" r="3.0" fill="none" stroke="#333" stroke-width="1.3"/><circle cx="382.2" cy="715.9" r="3.0" fill="none" stroke="#333" stroke-width="1.3"/></svg>
<div class="a" style="left:156.60px;top:730.40px;width:856.10px;height:1.20px;background:#999;"></div>
<div class="a" style="left:156.60px;top:434.90px;width:856.10px;height:1.10px;background:#3a3a3a;"></div>
</body></html>
